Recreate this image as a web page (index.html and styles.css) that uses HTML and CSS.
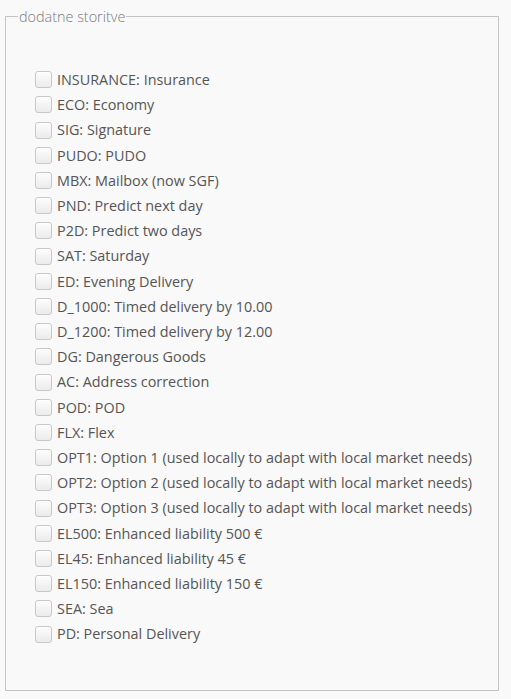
FILE: index.html
```html
<!DOCTYPE html>
<html lang="sl">
<head>
  <meta charset="UTF-8" />
  <title>Dodatne storitve</title>
  <link rel="stylesheet" href="styles.css">
</head>
<body>
  <fieldset class="services">
    <legend>dodatne storitve</legend>
    <div class="options">
      <label class="option"><input type="checkbox" name="INSURANCE"> INSURANCE: Insurance</label>
      <label class="option"><input type="checkbox" name="ECO"> ECO: Economy</label>
      <label class="option"><input type="checkbox" name="SIG"> SIG: Signature</label>
      <label class="option"><input type="checkbox" name="PUDO"> PUDO: PUDO</label>
      <label class="option"><input type="checkbox" name="MBX"> MBX: Mailbox (now SGF)</label>
      <label class="option"><input type="checkbox" name="PND"> PND: Predict next day</label>
      <label class="option"><input type="checkbox" name="P2D"> P2D: Predict two days</label>
      <label class="option"><input type="checkbox" name="SAT"> SAT: Saturday</label>
      <label class="option"><input type="checkbox" name="ED"> ED: Evening Delivery</label>
      <label class="option"><input type="checkbox" name="D_1000"> D_1000: Timed delivery by 10.00</label>
      <label class="option"><input type="checkbox" name="D_1200"> D_1200: Timed delivery by 12.00</label>
      <label class="option"><input type="checkbox" name="DG"> DG: Dangerous Goods</label>
      <label class="option"><input type="checkbox" name="AC"> AC: Address correction</label>
      <label class="option"><input type="checkbox" name="POD"> POD: POD</label>
      <label class="option"><input type="checkbox" name="FLX"> FLX: Flex</label>
      <label class="option"><input type="checkbox" name="OPT1"> OPT1: Option 1 (used locally to adapt with local market needs)</label>
      <label class="option"><input type="checkbox" name="OPT2"> OPT2: Option 2 (used locally to adapt with local market needs)</label>
      <label class="option"><input type="checkbox" name="OPT3"> OPT3: Option 3 (used locally to adapt with local market needs)</label>
      <label class="option"><input type="checkbox" name="EL500"> EL500: Enhanced liability 500 €</label>
      <label class="option"><input type="checkbox" name="EL45"> EL45: Enhanced liability 45 €</label>
      <label class="option"><input type="checkbox" name="EL150"> EL150: Enhanced liability 150 €</label>
      <label class="option"><input type="checkbox" name="SEA"> SEA: Sea</label>
      <label class="option"><input type="checkbox" name="PD"> PD: Personal Delivery</label>
    </div>
  </fieldset>
</body>
</html>
```

FILE: styles.css
```css
body {
  font-family: "Open Sans", "Liberation Sans", sans-serif;
  font-size: 14.4px;
  background-color: #f9f9f9;
  color: #555;
  margin: 0;
  padding: 7px 0 0 5px;
}

.services {
  width: 494px;
  height: 684px;
  box-sizing: border-box;
  margin: 0;
  border: 1px solid #c4c4c4;
  padding: 0;
}

.services legend {
  color: #7a7a7a;
  font-weight: 300;
  line-height: 19px;
  padding: 0 1px;
  margin-left: 12px;
}

.options {
  display: flex;
  flex-direction: column;
  padding: 41px 0 0 29px;
}

.option {
  display: flex;
  align-items: center;
  line-height: 25.2px;
  white-space: nowrap;
}

.option input[type="checkbox"] {
  appearance: none;
  width: 17px;
  height: 17px;
  margin: 0 5px 0 0;
  border: 1px solid #c8c8c8;
  border-radius: 3px;
  background: linear-gradient(#fdfdfd, #ebebeb);
  box-shadow: inset 0 1px 0 #fff;
}
```
